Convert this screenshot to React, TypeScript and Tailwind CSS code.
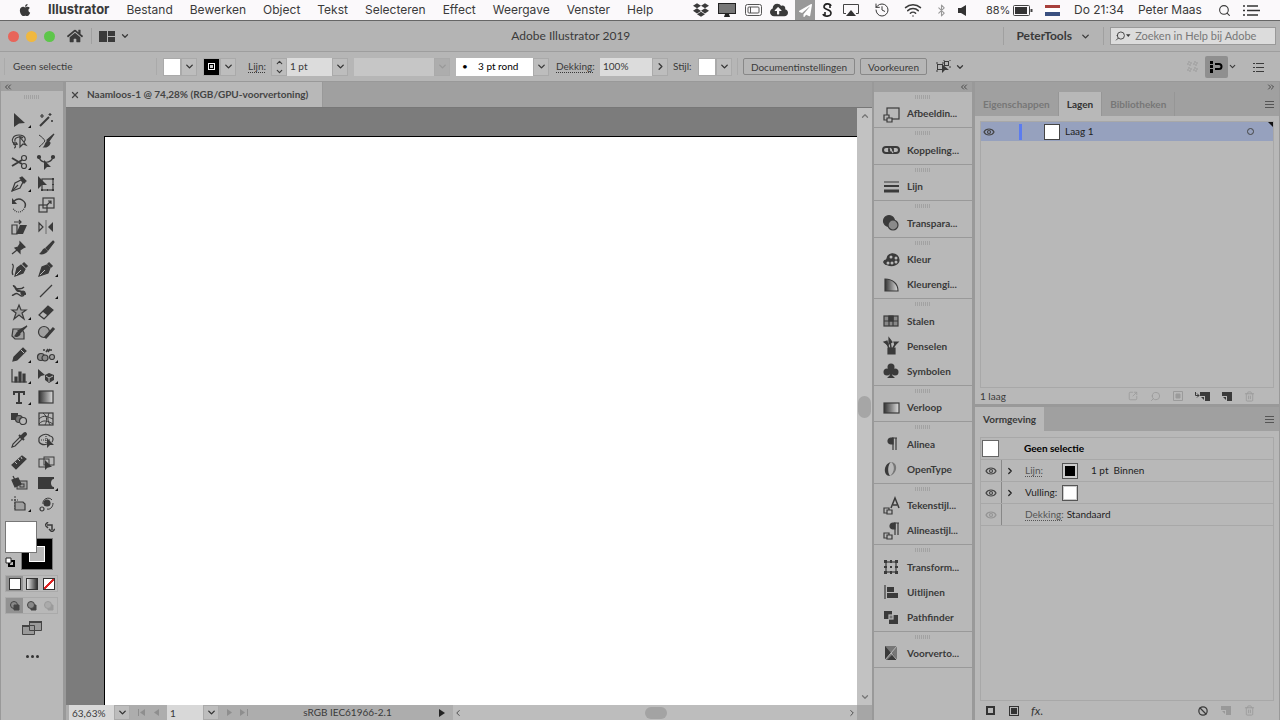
import { useState } from 'react';
import type { ReactNode } from 'react';
import { FaApple, FaDropbox, FaCloudUploadAlt, FaPaperPlane, FaHome } from 'react-icons/fa';
import { ChevronDown, ChevronRight, ChevronLeft, ChevronUp, ChevronsLeft, ChevronsRight, Search, Wifi, Bluetooth, History, Trash2, Ban, SquareArrowOutUpRight, X } from 'lucide-react';

const menus = ['Bestand', 'Bewerken', 'Object', 'Tekst', 'Selecteren', 'Effect', 'Weergave', 'Venster', 'Help'];

type Tool = { name: string; more?: boolean; art: ReactNode };

// Every tool is drawn around 0,0 in a 26 x 20 box
const tools: Tool[] = [
  { name: 'Selectie', more: true, art: <path d="M-5 -7L6 3L0 3.500L-5 7Z" fill="currentColor" stroke="none" /> },
  { name: 'Toverstaf', art: <><path d="M-6 6L3 -3" strokeWidth="2" /><path d="M-4 -6v4M-6 -4h4M4 -7v3M2.500 -5.500h3M6 0v2M5 1h2" /></> },
  { name: 'Lasso', art: <><path d="M-1 3C-6 4 -8 0 -6 -3C-4 -7 4 -7 6 -3C7 -1 6 0 5 1M-4 1c-2 0 -2 3 0 3s2 -3 0 -3M-4 4c1 2 0 3 -1 3M-4 0C-5 -4 2 -5 4 -3" /><path d="M1 -4L7 4L4 3L1 6Z" fill="#b8b8b8" /></> },
  { name: 'Segmentselectie', art: <><path d="M-7 -6C-4 -4 -2 -2 -1 0C-3 2 -4 4 -7 6" strokeWidth="1" /><path d="M8 -7L3 0L1 -1Z" fill="currentColor" /><path d="M2 0L4 2C3 5 0 6 -2 6C0 4 -1 1 2 0Z" fill="currentColor" /></> },
  { name: 'Schaar', more: true, art: <><path d="M-7 -4L3 2M-7 4L3 -2" strokeWidth="2" /><circle cx="5" cy="-4" r="2.500" /><circle cx="5" cy="4" r="2.500" /></> },
  { name: 'Kromming', art: <><path d="M-7 -5C-5 2 5 2 7 -5" /><circle cx="-7" cy="-5" r="1.500" fill="currentColor" /><circle cx="7" cy="-5" r="1.500" fill="currentColor" /><path d="M-2 -2L5 5L1 5L-2 8Z" fill="currentColor" stroke="none" /></> },
  { name: 'Mes', more: true, art: <><path d="M-7 7L-4 -1L2 -4L4 -2L1 4Z" /><path d="M1 -6L3 -7L7 -3L5 -1Z" fill="currentColor" /><path d="M-7 7L-1 1" /></> },
  { name: 'Vrije transformatie', art: <><rect x="-4" y="-5" width="11" height="11" /><path d="M-8 -8L1 1L-4 1L-8 5Z" fill="currentColor" stroke="none" /><path d="M6 -6h2v2h-2zM6 5h2v2h-2zM-5 5h2v2h-2zM6 0h2v1h-2zM1 5h1v2h-1z" fill="currentColor" stroke="none" /></> },
  { name: 'Roteren', art: <><path d="M-5 -4C1 -9 8 -3 6 2" strokeWidth="1.500" /><path d="M6 2C3 9 -4 8 -6 3" strokeDasharray="1 1" /><path d="M-7 -7V-1H-2Z" fill="currentColor" stroke="none" /></> },
  { name: 'Schalen', art: <><rect x="-3" y="-7" width="11" height="10" /><rect x="-7" y="0" width="8" height="7" /><path d="M1 0L5 -4M2 -4h3v3" /></> },
  { name: 'Schuintrekken', art: <><path d="M-7 -2h5v9h-5z" /><path d="M1 -2h7L4 7H-3Z" fill="currentColor" stroke="none" /><path d="M-5 -5h7M0 -7l2 2l-2 2" /></> },
  { name: 'Spiegelen', art: <><path d="M-7 -4L-3 0L-7 4Z" /><path d="M0 -7V7" strokeWidth="1" strokeOpacity=".6" /><path d="M7 -5V5L2 0Z" fill="currentColor" stroke="none" /></> },
  { name: 'Marionet verdraaien', art: <><path d="M1 -6L6 -1L4 0L1 2L1 5L-4 0L-1 -1L1 -4Z" fill="currentColor" /><path d="M-2 2L-7 6" /></> },
  { name: 'Penseel', art: <><path d="M7 -7L8 -6L2 2L0 0Z" fill="currentColor" /><path d="M-1 0L2 3C0 6 -4 7 -7 6C-4 4 -4 1 -1 0Z" fill="currentColor" stroke="none" /></> },
  { name: 'Pen voor kromming', art: <><path d="M-7 -5C-3 -3 -9 2 -6 6" /><path d="M-4 7L-2 -1L2 -4L6 0L4 4Z" fill="currentColor" /><path d="M4 -6L8 -2" strokeWidth="3" /><path d="M-3 6L2 1" stroke="#b8b8b8" strokeWidth="1" /></> },
  { name: 'Pen', more: true, art: <><path d="M-7 7L-4 -2L1 -4L4 -1L2 4Z" fill="currentColor" /><path d="M2 -6L6 -2" strokeWidth="3" /><path d="M-6 6L-1 1" stroke="#b8b8b8" strokeWidth="1" /></> },
  { name: 'Breedte', art: <><path d="M-6 -5C-3 -6 -4 0 0 0C4 0 3 3 7 3" strokeWidth="2" /><path d="M-7 4C-5 5 -4 1 -1 3S3 6 5 4M-3 -2C0 -3 2 -1 5 -4" strokeWidth="1.500" /><circle cx="4" cy="2" r="2" fill="currentColor" /></> },
  { name: 'Lijnsegment', more: true, art: <path d="M-6 6L6 -6" /> },
  { name: 'Ster', more: true, art: <path d="M0 -7L2 -2L7 -2L3 1L5 7L0 3L-5 7L-3 1L-7 -2L-2 -2Z" fill="#a0a0a0" /> },
  { name: 'Gummetje', art: <><path d="M-7 3L2 -6L7 -2L-2 7Z" fill="currentColor" /><path d="M-6 3L-3 0L1 3L-2 6Z" fill="#b8b8b8" stroke="none" /></> },
  { name: 'Schetsblok', art: <><path d="M-6 -4H3L5 0V6H-4L-7 3Z" fill="#a0a0a0" /><path d="M8 -7L1 0L-1 -2Z" fill="currentColor" /><path d="M-1 -1L1 1C0 3 -2 4 -4 3C-2 1 -3 0 -1 -1Z" fill="currentColor" /></> },
  { name: 'Vloeiend', art: <><circle cx="-2" cy="-1" r="5.500" fill="#a0a0a0" /><path d="M8 -5L-1 5" strokeWidth="3" /></> },
  { name: 'Potlood', more: true, art: <><path d="M-6 6L-5 2L4 -7L7 -4L-2 5Z" fill="currentColor" /><path d="M2 -5L5 -2" stroke="#b8b8b8" strokeWidth="1" /></> },
  { name: 'Symbolen spuiten', more: true, art: <><circle cx="-5" cy="2" r="3.500" fill="#8c8c8c" /><circle cx="-1" cy="3" r="3" fill="#8c8c8c" /><circle cx="6" cy="2" r="2.500" fill="#a0a0a0" /><path d="M-3 -5h2M4 -5h2M0 -3l2 -3M2 -3l2 -3" strokeWidth="1.500" /></> },
  { name: 'Grafiek', more: true, art: <><path d="M-7 -7V6H8" /><path d="M-4 1h2v5h-2zM0 -4h2v10h-2zM4 -2h2v8h-2z" fill="currentColor" /></> },
  { name: 'Perspectief', more: true, art: <><path d="M-8 -7L-1 -1L-5 0L-8 3Z" fill="currentColor" stroke="none" /><path d="M3 -3L8 -1V4L3 7L-1 4V-1Z" fill="currentColor" stroke="none" /><path d="M0 0L3 2L7 0M3 2V6" stroke="#b8b8b8" strokeWidth="1" /></> },
  { name: 'Tekst', more: true, art: <path d="M-5 -2V-5H5V-2M0 -5V6M-3 6H3" strokeWidth="2" /> },
  { name: 'Verloop', art: <rect x="-7" y="-6" width="14" height="12" fill="url(#fade)" /> },
  { name: 'Overvloeien', art: <><path d="M-8 -6h7v7h-7z" fill="currentColor" stroke="none" /><circle cx="0" cy="0" r="3.500" fill="#777" /><circle cx="4" cy="2" r="3.500" fill="#b8b8b8" /></> },
  { name: 'Net', art: <><rect x="-7" y="-6" width="14" height="12" /><path d="M-7 0C-2 -5 2 -2 7 0M-7 5C-3 0 2 2 7 5M-3 -6C2 -2 1 2 -1 6M3 -6C1 -1 2 2 4 6" strokeWidth="1" /></> },
  { name: 'Pipet', art: <><path d="M-7 7L-6 4L1 -3L3 -1L-4 6Z" /><path d="M0 -5L5 0" strokeWidth="2" /><path d="M2 -4L5 -7C7 -8 8 -6 7 -5L4 -2Z" fill="currentColor" /></> },
  { name: 'Vormen maken', art: <><path d="M1 4C-3 6 -8 3 -7 0C-8 -4 0 -8 4 -4C7 -4 8 0 6 2" /><path d="M-5 0H5M0 -4V3" strokeDasharray="1 1" /><path d="M1 -2L8 5L4 5L1 8Z" fill="currentColor" stroke="none" /></> },
  { name: 'Meten', art: <><path d="M-7 3L3 -6L7 -3L-3 7Z" fill="currentColor" /><path d="M-4 0l2 2M-1 -3l2 2M2 -5l1 2" stroke="#b8b8b8" strokeWidth="1" /></> },
  { name: 'Actief verfvak', art: <><rect x="-7" y="-3" width="10" height="8" strokeWidth="1" /><rect x="-2" y="-5" width="10" height="8" strokeWidth="1" /><path d="M-1 -2L6 5L2 5L-1 8Z" fill="currentColor" stroke="none" /></> },
  { name: 'Emmertje', art: <><rect x="-2" y="-2" width="10" height="8" fill="#a0a0a0" strokeWidth="1" /><rect x="1" y="1" width="4" height="3" strokeWidth="1" /><path d="M-7 -3L-1 -5L2 1L-4 4Z" fill="currentColor" /><path d="M-6 -7L-4 -3" /></> },
  { name: 'Omslag', more: true, art: <path d="M-8 -6H8V-4C4 -4 4 4 8 4V6H-8Z" fill="currentColor" stroke="none" /> },
  { name: 'Tekengebied', more: true, art: <><path d="M-4 -8V5M-8 -4H-1" strokeDasharray="2 1" strokeWidth="1" /><path d="M-4 -2H4L6 0V6H-4Z" fill="#a0a0a0" /></> },
  { name: 'Zwaartepunt', art: <><circle cx="1" cy="-1" r="3" fill="currentColor" /><circle cx="-4" cy="5" r="2" /><path d="M-3 0C-4 -5 3 -8 6 -4M7 -1C7 3 4 6 1 5" strokeWidth="1" /></> },
];

const hooks = <><path d="M-7 2h5v5h-5z" /><path d="M-4 4h5v4h-5z" fill="#b8b8b8" /></>;
const pilcrow = <><path d="M1 -6H6M2 -6V6M5 -6V6" /><path d="M2 -6H0A3 3 0 0 0 0 0H2Z" fill="currentColor" /></>;

const dock: { label: string; art: ReactNode }[][] = [
  [{ label: 'Afbeeldin...', art: <><rect x="-4" y="-6" width="12" height="11" /><path d="M-7 1h5v5h-5z" fill="#b8b8b8" /><path d="M-4 4h5v4h-5z" fill="#b8b8b8" /></> }],
  [{ label: 'Koppeling...', art: <><rect x="-8" y="-3" width="10" height="6" rx="3" strokeWidth="2" /><rect x="-2" y="-3" width="10" height="6" rx="3" strokeWidth="2" /><path d="M-1 -2L2 3" stroke="#b8b8b8" /></> }],
  [{ label: 'Lijn', art: <><path d="M-7 -5H8" strokeWidth="1" /><path d="M-7 -1H8" strokeWidth="2" /><path d="M-7 4H8" strokeWidth="3" /></> }],
  [{ label: 'Transpara...', art: <><circle cx="-2" cy="-2" r="5.500" fill="currentColor" /><circle cx="2" cy="2" r="5" fill="#8a8a8a" /></> }],
  [
    { label: 'Kleur', art: <><path d="M0 -6C5 -7 8 -3 8 0C8 4 2 7 -3 5C-7 5 -9 1 -5 0C-3 0 -5 -5 0 -6Z" fill="currentColor" /><g fill="#b8b8b8" stroke="none"><circle cx="0" cy="-3" r="1.500" /><circle cx="5" cy="-2" r="1.500" /><circle cx="-3" cy="3" r="1.500" /><circle cx="1" cy="3" r="1.500" /><circle cx="5" cy="2" r="1.500" /></g></> },
    { label: 'Kleurengi...', art: <path d="M-6 -6C2 -6 7 -1 7 6H-6Z" fill="url(#fade)" /> },
  ],
  [
    { label: 'Stalen', art: <><rect x="-7" y="-5" width="14" height="10" fill="#888" /><path d="M-2 -5h4v5h-4z" fill="currentColor" /><path d="M-7 0H7M-2 -5V5M2 -5V5" /></> },
    { label: 'Penselen', art: <><path d="M-3 2H4V8H-3Z" fill="currentColor" /><path d="M-2 2L-5 -4M0 2L-1 -5M2 2L5 -3" strokeWidth="1.500" /><path d="M-7 -4L-4 -5L-3 -1ZM-2 -8L1 -4L-2 -2ZM3 -4H7L4 -1Z" fill="currentColor" /></> },
    { label: 'Symbolen', art: <g fill="currentColor" stroke="none"><circle cx="0" cy="-4" r="3.500" /><circle cx="-4" cy="1" r="3.500" /><circle cx="4" cy="1" r="3.500" /><path d="M-1 -2H1L1 4L4 7H-4L-1 4Z" /></g> },
  ],
  [{ label: 'Verloop', art: <rect x="-7" y="-5" width="15" height="10" fill="url(#fade)" /> }],
  [
    { label: 'Alinea', art: pilcrow },
    { label: 'OpenType', art: <><path d="M0 -7C-8 -5 -8 7 -1 7C-4 3 -3 -5 0 -7Z" fill="currentColor" stroke="none" /><path d="M0 -7C8 -6 6 5 -1 7C4 3 4 -4 0 -7Z" fill="#777" stroke="none" /></> },
  ],
  [
    { label: 'Tekenstijl...', art: <>{hooks}<path d="M0 2L4 -8L8 2M2 -1H6" strokeWidth="1.500" /></> },
    { label: 'Alineastijl...', art: <>{hooks}<g transform="translate(2 -2)">{pilcrow}</g></> },
  ],
  [
    { label: 'Transform...', art: <><rect x="-5" y="-5" width="10" height="10" /><path d="M-7 -7h3v3h-3zM4 -7h3v3h-3zM-7 4h3v3h-3zM4 4h3v3h-3zM-1 -7h2v3h-2zM-1 4h2v3h-2zM-7 -1h3v2h-3zM4 -1h3v2h-3zM-1 -1h2v2h-2z" fill="currentColor" stroke="none" /></> },
    { label: 'Uitlijnen', art: <><path d="M-6 -7V7" /><path d="M-4 -5h7v5h-7zM-4 1h11v5h-11z" fill="currentColor" stroke="none" /></> },
    { label: 'Pathfinder', art: <><path d="M-7 -6h8v8h-8zM-2 -2h9v9h-9z" fill="currentColor" stroke="none" /><rect x="-2" y="-2" width="4" height="4" fill="#777" stroke="#b8b8b8" /></> },
  ],
  [{ label: 'Voorverto...', art: <><rect x="-6" y="-7" width="12" height="14" fill="#777" stroke="none" /><path d="M-6 -7L0 0L-6 7ZM6 7H-4L2 1Z" fill="currentColor" stroke="none" /><path d="M-6 7L6 -7M0 0L6 7" stroke="#b8b8b8" strokeWidth="1" /></> }],
];

function Art({ children, className }: { children: ReactNode; className: string }) {
  return (
    <svg viewBox="-13 -10 26 20" className={className} fill="none" stroke="currentColor" strokeWidth="1.200" aria-hidden="true">
      {children}
    </svg>
  );
}

function Grip() {
  return <div className="mx-auto h-1 w-4 bg-[repeating-linear-gradient(90deg,#a2a2a2_0_1px,transparent_1px_2px)]" />;
}

function Drop({ label, faded }: { label: string; faded?: boolean }) {
  return (
    <button aria-label={label} className={`flex h-full w-4 shrink-0 items-center justify-center border border-[#aaaaaa] ${faded ? 'bg-[#adadad] text-[#999999]' : 'bg-[#bdbdbd] text-[#333333]'}`}>
      <ChevronDown size={11} strokeWidth={3} />
    </button>
  );
}

function MenuBar() {
  return (
    <header className="flex h-5 shrink-0 items-center bg-[#fbf9fb] pr-5 pl-[18px] font-['Inter',sans-serif] text-[12px] whitespace-nowrap text-[#3a3a3a]">
      <FaApple size={14} className="mr-4" />
      <nav className="flex items-center gap-[17px]">
        <a href="#app" className="text-[13px] font-bold">Illustrator</a>
        {menus.map((m) => <a key={m} href={`#${m}`}>{m}</a>)}
      </nav>
      <div className="ml-auto flex h-full items-center">
        <span className="flex w-[26px] justify-center"><FaDropbox size={16} /></span>
        <span className="flex w-[26px] justify-center">
          <svg width="18" height="14" viewBox="0 0 18 14"><rect x=".5" y=".5" width="17" height="10" fill="#777" stroke="#222" /><path d="M7 11h4l1 3H6z" fill="#222" /></svg>
        </span>
        <span className="flex w-[26px] justify-center">
          <svg width="17" height="12" viewBox="0 0 17 12" fill="none" stroke="#555"><rect x=".5" y=".5" width="16" height="11" rx="2" /><rect x="3" y="3" width="11" height="6" rx="1" /><path d="M5.500 3v6" /></svg>
        </span>
        <span className="flex w-[26px] justify-center"><FaCloudUploadAlt size={18} /></span>
        <span className="flex w-[26px] justify-center">
          <span className="flex h-5 w-5 items-center justify-center bg-[#999999] text-white"><FaPaperPlane size={13} /></span>
        </span>
        <span className="flex w-[18px] justify-center">
          <svg width="11" height="14" viewBox="0 0 11 14" fill="none" stroke="#222" strokeWidth="1.600"><path d="M9 3C8 0 2 0 2 4C2 7 9 6 9 10C9 14 2 14 1 11M8 1V5M3 9V13" /></svg>
        </span>
        <span className="flex w-[30px] justify-center">
          <svg width="16" height="13" viewBox="0 0 16 13" fill="none" stroke="#444"><path d="M3 9.500H.5V.5h15v9H13" /><path d="M8 6l5 6H3z" fill="#333" stroke="none" /></svg>
        </span>
        <span className="flex w-8 justify-center"><History size={16} strokeWidth={1.500} /></span>
        <span className="flex w-[30px] justify-center"><Wifi size={18} /></span>
        <span className="flex w-[26px] justify-center text-[#999999]"><Bluetooth size={13} /></span>
        <span className="flex w-4 justify-center">
          <svg width="8" height="11" viewBox="0 0 8 11" fill="#333"><path d="M0 3h3l5-3v11L3 8H0z" /></svg>
        </span>
        <span className="ml-4 w-[27px] text-[11px]">88%</span>
        <svg width="20" height="11" viewBox="0 0 20 11" fill="none" stroke="#444"><rect x=".5" y=".5" width="16" height="10" rx="1" /><path d="M2 2h12v7H2z" fill="#333" stroke="none" /><path d="M18.500 4v3" strokeWidth="2" /></svg>
        <span className="ml-3 flex h-[11px] w-[15px] flex-col">
          <span className="flex-1 bg-[#a8403c]" /><span className="flex-1 bg-white" /><span className="flex-1 bg-[#3a5080]" />
        </span>
        <span className="ml-[14px] w-16">Do 21:34</span>
        <span className="w-20">Peter Maas</span>
        <Search size={13} />
        <svg width="17" height="11" viewBox="0 0 17 11" className="ml-3" stroke="#333" strokeWidth="1.500"><path d="M0 1h2M0 5.500h2M0 10h2M4 1h11M4 5.500h13M4 10h11" /></svg>
      </div>
    </header>
  );
}

function TitleBar() {
  return (
    <div className="grid h-8 shrink-0 grid-cols-[11fr_auto_14fr] items-center border-t border-b border-t-[#666666] border-b-[#9e9e9e] bg-[#b4b4b4] px-1">
      <div className="flex items-center pl-1">
        <button aria-label="Sluiten" className="h-[11px] w-[11px] rounded-full bg-[#e8655a]" />
        <button aria-label="Minimaliseren" className="ml-[7px] h-[11px] w-[11px] rounded-full bg-[#f0b840]" />
        <button aria-label="Vergroten" className="ml-[7px] h-[11px] w-[11px] rounded-full bg-[#5dc64a]" />
        <button aria-label="Home" className="ml-3"><FaHome size={16} /></button>
        <span className="mr-[7px] ml-2 h-4 border-l border-[#a0a0a0]" />
        <svg width="16" height="11" viewBox="0 0 16 11" fill="currentColor"><path d="M0 0h8v11H0zM9 0h7v5H9zM9 6h7v5H9z" /></svg>
        <ChevronDown size={10} strokeWidth={3} className="ml-[5px]" />
      </div>
      <h1 className="text-[12px]">Adobe Illustrator 2019</h1>
      <div className="flex items-center justify-end">
        <button className="flex h-[18px] items-center border-r border-l border-[#a0a0a0] px-3 text-[12px] font-bold">
          PeterTools <ChevronDown size={11} strokeWidth={3} className="ml-2" />
        </button>
        <label className="ml-[6px] flex h-[18px] w-[166px] items-center border border-[#999999] bg-[#dcdcdc] pl-1">
          <Search size={12} className="-scale-x-100" />
          <svg width="6" height="4" viewBox="0 0 6 4" fill="currentColor"><path d="M0 0h5L2.500 3z" /></svg>
          <input aria-label="Zoeken" placeholder="Zoeken in Help bij Adobe" className="w-full min-w-0 pl-1 text-[11px] outline-none placeholder:text-[#777777]" />
        </label>
      </div>
    </div>
  );
}

function ControlBar() {
  return (
    <div className="flex h-[30px] shrink-0 items-center border-b border-[#999999] bg-[#b6b6b6] pr-4 pl-1 whitespace-nowrap">
      <span className="h-[17px] w-[153px] border-r border-l border-[#aaaaaa] pl-2 leading-4">Geen selectie</span>
      <div className="ml-[6px] flex h-[18px]">
        <button aria-label="Vulling" className="w-[18px] border border-[#aaaaaa] bg-white" />
        <Drop label="Vulling kiezen" />
      </div>
      <div className="ml-[6px] flex h-[18px]">
        <button aria-label="Omtrek" className="flex w-[17px] items-center justify-center border border-[#aaaaaa] bg-black">
          <span className="h-[7px] w-[7px] border border-white bg-black p-px"><span className="block h-[3px] w-[3px] bg-[#cccccc]" /></span>
        </button>
        <Drop label="Omtrek kiezen" />
      </div>
      <label htmlFor="weight" className="ml-3 w-[23px] underline decoration-dotted underline-offset-2">Lijn:</label>
      <div className="flex h-[18px]">
        <div className="flex w-4 flex-col items-center justify-center border border-[#aaaaaa] bg-[#bdbdbd]">
          <button aria-label="Dikker"><ChevronUp size={9} strokeWidth={3} /></button>
          <button aria-label="Dunner"><ChevronDown size={9} strokeWidth={3} /></button>
        </div>
        <input id="weight" defaultValue="1 pt" className="w-[45px] bg-[#dcdcdc] pl-[3px] outline-none" />
        <Drop label="Lijndikten" />
      </div>
      <div className="ml-[6px] flex h-[18px]">
        <input aria-label="Breedteprofiel" disabled className="w-20 bg-[#c6c6c6]" />
        <Drop label="Profielen" faded />
      </div>
      <div className="relative ml-[6px] h-[18px]">
        <select aria-label="Penseel" className="h-full w-[93px] appearance-none bg-white pl-[6px] text-black outline-none">
          <option>•&nbsp;&nbsp;&nbsp;&nbsp;3 pt rond</option>
        </select>
        <span className="pointer-events-none absolute top-0 right-0 flex h-full w-4 items-center justify-center border border-[#aaaaaa] bg-[#bdbdbd]"><ChevronDown size={11} strokeWidth={3} /></span>
      </div>
      <label htmlFor="opacity" className="ml-[7px] w-11 underline decoration-dotted underline-offset-2">Dekking:</label>
      <div className="flex h-[18px]">
        <input id="opacity" defaultValue="100%" className="w-[52px] bg-[#dcdcdc] pl-[3px] outline-none" />
        <button aria-label="Dekking aanpassen" className="flex w-4 items-center justify-center border border-[#aaaaaa] bg-[#bdbdbd]"><ChevronRight size={11} strokeWidth={3} /></button>
      </div>
      <span className="ml-[5px] w-[25px]">Stijl:</span>
      <div className="flex h-[18px]">
        <button aria-label="Stijl" className="w-[18px] border border-[#aaaaaa] bg-white" />
        <Drop label="Stijlen" />
      </div>
      <span className="mx-[5px] h-[17px] border-l border-[#aaaaaa]" />
      <button className="h-[17px] w-28 rounded-xs border border-[#888888] leading-none">Documentinstellingen</button>
      <button className="ml-[5px] h-[17px] w-[67px] rounded-xs border border-[#888888] leading-none">Voorkeuren</button>
      <button aria-label="Vergelijkbare objecten" className="ml-[9px] flex items-center gap-1">
        <svg width="15" height="13" viewBox="0 0 15 13" fill="none" stroke="currentColor"><rect x="1.500" y="4.500" width="5" height="5" /><rect x="8.500" y="1.500" width="4" height="4" /><path d="M0 3h2M6 3h2M7 0h2M13 0h2M0 11h2M13 7h2" /><path d="M6 4l7 6H9l-3 3z" fill="currentColor" stroke="none" /></svg>
        <ChevronDown size={10} strokeWidth={3} />
      </button>
      <div className="ml-auto flex items-center">
        <svg width="11" height="11" viewBox="0 0 11 11" fill="none" stroke="#999" strokeDasharray="2 1"><path d="M1 1h3v3H1zM7 1h3v3H7zM1 7h3v3H1zM7 7h3v3H7z" /></svg>
        <button aria-label="Magnetisch" className="ml-[7px] flex h-[22px] w-[23px] items-center justify-center rounded-xs bg-[#8f8f8f] text-black">
          <svg width="13" height="12" viewBox="0 0 13 12" fill="currentColor"><path d="M0 0h3v3H0zM0 4h3v3H0zM0 8h3v4H0z" /><path d="M5 3h4a2.500 2.500 0 0 1 0 5H5" fill="none" stroke="currentColor" strokeWidth="2" /></svg>
        </button>
        <ChevronDown size={9} strokeWidth={3} />
        <svg width="11" height="10" viewBox="0 0 11 10" stroke="currentColor" className="ml-4"><path d="M0 1.500h2M0 5.500h2M0 9.500h2M3 1.500h8M3 5.500h8M3 9.500h8" /></svg>
      </div>
    </div>
  );
}

function ToolPanel() {
  return (
    <aside className="flex w-[66px] shrink-0 flex-col border-r-3 border-l border-[#999999] bg-[#b8b8b8]">
      <div className="flex h-[9px] shrink-0 items-center bg-[#a0a0a0] pl-[2px]"><ChevronsLeft size={10} /></div>
      <div className="pt-1"><Grip /></div>
      <div className="mt-[10px] ml-1 grid h-[406px] w-[54px] shrink-0 auto-rows-fr grid-cols-2">
        {tools.map((t) => (
          <button key={t.name} aria-label={t.name} className="flex items-center justify-center">
            <Art className="h-5 w-[26px] shrink-0">
              {t.art}
              {t.more && <path d="M12 5V8H9Z" fill="#111" stroke="none" />}
            </Art>
          </button>
        ))}
      </div>
      <div className="relative mt-[6px] ml-1 h-[50px] w-12">
        <button aria-label="Omtrekkleur" className="absolute right-0 bottom-px h-8 w-8 border border-[#777777] bg-black p-[7px]">
          <span className="block h-full w-full border border-white bg-[#b8b8b8]" />
        </button>
        <button aria-label="Vulkleur" className="absolute top-0 left-0 h-8 w-8 border border-[#777777] bg-white" />
        <svg width="10" height="10" viewBox="0 0 10 10" className="absolute top-px -right-[2px]" fill="none" stroke="currentColor" strokeWidth="1.500"><path d="M2 3h5v5M3 0L0 3l3 3M4 7l3 3l3-3" /></svg>
        <svg width="10" height="10" viewBox="0 0 10 10" className="absolute bottom-1 left-0"><path d="M4 4h5v5H4z" fill="#b8b8b8" stroke="#000" strokeWidth="2" /><path d="M1 1h5v5H1z" fill="#fff" stroke="#222" /></svg>
      </div>
      <div className="mt-1 ml-1 grid h-[17px] w-[53px] grid-cols-3 border border-[#aaaaaa] bg-[#bbbbbb]">
        <button aria-label="Kleur" className="flex items-center justify-center bg-[#949494]"><span className="h-3 w-3 border border-[#333333] bg-white" /></button>
        <button aria-label="Verloop vullen" className="flex items-center justify-center"><span className="h-3 w-3 border border-[#333333] bg-linear-to-r from-[#eeeeee] to-[#333333]" /></button>
        <button aria-label="Geen" className="flex items-center justify-center"><span className="h-3 w-3 border border-[#333333] bg-[linear-gradient(135deg,#fff_42%,#d22_42%_58%,#fff_58%)]" /></button>
      </div>
      <div className="mt-[5px] ml-1 flex h-[17px] w-[53px] items-center border border-[#aaaaaa]">
        {['#929292', 'transparent', 'transparent'].map((bg, i) => (
          <button key={i} aria-label={`Tekenmodus ${i + 1}`} style={{ background: bg, opacity: i === 2 ? 0.25 : 1 }} className="flex h-full flex-1 items-center justify-center">
            <svg width="10" height="10" viewBox="0 0 10 10" fill="#888" stroke="#444">
              {i === 0 ? <><circle cx="4" cy="4" r="3.500" /><path d="M4 4h5v5H4z" fill="#444" /></> : <><path d="M4 4h5v5H4z" fill="#444" /><circle cx="4" cy="4" r="3.500" /></>}
            </svg>
          </button>
        ))}
      </div>
      <button aria-label="Schermmodus" className="mx-auto mt-[7px]">
        <svg width="20" height="14" viewBox="0 0 20 14" fill="#999" stroke="#444"><path d="M.5 4.500h12v9H.5zM7.500 1.500h12v8h-12z" /><path d="M7 1h13" strokeWidth="2" /><path d="M0 5h7" strokeWidth="2" /></svg>
      </button>
      <button aria-label="Werkbalk bewerken" className="mx-auto mt-5 flex gap-[2px]">
        <span className="h-[3px] w-[3px] rounded-full bg-[#333333]" /><span className="h-[3px] w-[3px] rounded-full bg-[#333333]" /><span className="h-[3px] w-[3px] rounded-full bg-[#333333]" />
      </button>
    </aside>
  );
}

function StatusBar() {
  return (
    <footer className="flex h-[15px] shrink-0 items-center bg-[#adadad] pl-[3px]">
      <input aria-label="Zoom" defaultValue="63,63%" className="h-full w-[45px] bg-[#d8d8d8] pl-[3px] outline-none" />
      <Drop label="Zoomniveaus" />
      <div className="flex w-[37px] items-center justify-center gap-2 text-[#8e8e8e]">
        <svg width="8" height="7" viewBox="0 0 8 7" fill="currentColor"><path d="M0 0h1v7H0zM7 0v7L2 3.500z" /></svg>
        <svg width="5" height="7" viewBox="0 0 5 7" fill="currentColor"><path d="M5 0v7L0 3.500z" /></svg>
      </div>
      <input aria-label="Tekengebied" defaultValue="1" className="h-full w-9 bg-[#d8d8d8] pl-[3px] outline-none" />
      <Drop label="Tekengebieden" />
      <div className="flex w-[37px] items-center justify-center gap-2 text-[#8e8e8e]">
        <svg width="5" height="7" viewBox="0 0 5 7" fill="currentColor"><path d="M0 0v7l5-3.500z" /></svg>
        <svg width="8" height="7" viewBox="0 0 8 7" fill="currentColor"><path d="M7 0h1v7H7zM0 0v7l5-3.500z" /></svg>
      </div>
      <span className="w-[183px] text-center">sRGB IEC61966-2.1</span>
      <svg width="6" height="8" viewBox="0 0 6 8" fill="#222"><path d="M0 0v8l6-4z" /></svg>
      <div className="ml-2 flex h-full flex-1 items-center bg-[#bdbdbd]">
        <ChevronLeft size={10} />
        <span className="ml-[45%] h-3 w-[22px] rounded-full bg-[#a3a3a3]" />
        <ChevronRight size={10} className="ml-auto" />
      </div>
      <span className="h-full w-[15px] bg-[#a6a6a6]" />
    </footer>
  );
}

function DocumentArea() {
  return (
    <main className="flex min-w-0 flex-1 flex-col">
      <div className="flex h-[26px] shrink-0 border-b border-[#777777] bg-[#a0a0a0]">
        <div className="flex w-[257px] items-center border-r border-[#999999] bg-[#b8b8b8] pl-1 font-bold whitespace-nowrap text-[#444444]">
          <button aria-label="Document sluiten" className="mr-[7px]"><X size={10} strokeWidth={3} /></button>
          Naamloos-1 @ 74,28% (RGB/GPU-voorvertoning)
        </div>
      </div>
      <div className="flex min-h-0 flex-1">
        <div className="flex-1 bg-[#7c7c7c] pt-7 pl-[38px]"><div className="h-full border-t border-l border-black bg-white" /></div>
        <div className="flex w-[15px] shrink-0 flex-col items-center bg-[#c2c2c2] py-[3px] text-[#777777]">
          <ChevronUp size={10} strokeWidth={3} />
          <div className="flex flex-1 items-center"><span className="h-[22px] w-[13px] rounded-full bg-[#a6a6a6]" /></div>
          <ChevronDown size={10} strokeWidth={3} />
        </div>
      </div>
      <StatusBar />
    </main>
  );
}

function Dock() {
  return (
    <aside className="w-[103px] shrink-0 border-r-3 border-l-2 border-[#999999] bg-[#b8b8b8] font-bold">
      <div className="flex h-[10px] items-center justify-end bg-[#a0a0a0] pr-[3px]"><ChevronsLeft size={10} /></div>
      <div className="flex h-[576px] flex-col">
        {dock.map((group) => (
          <section key={group[0].label} className="flex flex-auto flex-col justify-end border-b border-[#999999] pb-px">
            <div className="flex-1 pt-[3px]"><Grip /></div>
            {group.map((item) => (
              <button key={item.label} className="flex h-[25px] shrink-0 items-center pl-1 whitespace-nowrap">
                <Art className="mr-[3px] h-5 w-[26px]">{item.art}</Art>
                {item.label}
              </button>
            ))}
          </section>
        ))}
      </div>
    </aside>
  );
}

function Burger() {
  return (
    <button aria-label="Deelvenstermenu" className="mr-[5px] ml-auto flex flex-col gap-[2px]">
      <span className="h-px w-[9px] bg-[#555555]" /><span className="h-px w-[9px] bg-[#555555]" /><span className="h-px w-[9px] bg-[#555555]" />
    </button>
  );
}

function Eye({ faded }: { faded?: boolean }) {
  return (
    <svg width="12" height="8" viewBox="0 0 12 8" className={faded ? 'opacity-30' : ''} fill="none" stroke="#444" strokeWidth="1.200">
      <path d="M1 4C3 0 9 0 11 4C9 8 3 8 1 4Z" /><circle cx="6" cy="4" r="1.500" />
    </svg>
  );
}

function NewIcon() {
  return <svg width="10" height="9" viewBox="0 0 10 9" fill="currentColor"><path d="M0 0h10v9H5V4H0z" /><path d="M1 5h3v3z" /></svg>;
}

function LayersPanel() {
  const [tab, setTab] = useState('Lagen');
  return (
    <section className="flex h-[312px] shrink-0 flex-col">
      <div className="flex h-6 shrink-0 items-center bg-[#a0a0a0] font-bold">
        {['Eigenschappen', 'Lagen', 'Bibliotheken'].map((t) => (
          <button key={t} onClick={() => setTab(t)} className={`h-full border-r border-[#969696] px-2 ${t === tab ? 'bg-[#b8b8b8] text-[#333333]' : 'text-[#777777]'}`}>{t}</button>
        ))}
        <Burger />
      </div>
      <div className="mx-[5px] mt-[5px] flex-1 border border-[#a8a8a8]">
        <div className="relative flex h-[19px] items-center bg-[#96a1be] text-[#222222]">
          <span className="ml-[2px] flex w-[36px] justify-start"><Eye /></span>
          <span className="h-4 w-[3px] bg-[#5b7cf0]" />
          <span className="ml-[22px] h-4 w-4 border border-[#444444] bg-white" />
          <span className="ml-[5px]">Laag 1</span>
          <span className="mr-[19px] ml-auto h-[7px] w-[7px] rounded-full border border-[#444444]" />
          <span className="absolute top-0 right-0 h-[5px] w-[5px] bg-[#111111] [clip-path:polygon(0_0,100%_0,100%_100%)]" />
        </div>
      </div>
      <div className="flex h-4 shrink-0 items-center pr-6 pl-[5px]">
        1 laag
        <div className="ml-auto flex items-center gap-3">
          <button aria-label="Exporteren" className="text-[#9b9b9b]"><SquareArrowOutUpRight size={10} /></button>
          <button aria-label="Zoeken" className="text-[#9b9b9b]"><Search size={11} className="-scale-x-100" /></button>
          <button aria-label="Masker" className="text-[#9b9b9b]"><svg width="10" height="10" viewBox="0 0 10 10" fill="none" stroke="currentColor"><path d="M.5.5h9v9h-9z" /><path d="M3 3h4v4H3z" fill="currentColor" /></svg></button>
          <button aria-label="Sublaag" className="flex"><svg width="5" height="6" viewBox="0 0 5 6" fill="none" stroke="currentColor"><path d="M.5 0v3.500H4M2 1.500l2 2l-2 2" /></svg><NewIcon /></button>
          <button aria-label="Nieuwe laag"><NewIcon /></button>
          <button aria-label="Verwijderen" className="text-[#9b9b9b]"><Trash2 size={11} /></button>
        </div>
      </div>
    </section>
  );
}

function AppearancePanel() {
  return (
    <section className="flex min-h-0 flex-1 flex-col border-t-3 border-[#999999]">
      <div className="flex h-6 shrink-0 items-center bg-[#a0a0a0] font-bold">
        <button className="h-full bg-[#b8b8b8] px-2">Vormgeving</button>
        <Burger />
      </div>
      <div className="mx-[5px] mt-[6px] flex-1 border border-[#a8a8a8] text-[#222222]">
        <div className="flex h-[22px] items-center border-b border-[#a8a8a8] pl-px font-bold text-black">
          <span className="mr-[25px] h-[17px] w-[17px] border border-[#666666] bg-white" />
          Geen selectie
        </div>
        <div className="flex h-[22px] items-center border-b border-[#a8a8a8]">
          <span className="flex h-full w-[21px] items-center justify-center border-r border-[#888888]"><Eye /></span>
          <ChevronRight size={10} strokeWidth={3} className="mx-[3px]" />
          <a href="#lijn" className="ml-[7px] w-[37px] text-[#555555] underline decoration-dotted underline-offset-2">Lijn:</a>
          <span className="h-4 w-4 border border-[#555555] bg-[#cccccc] p-[2px]"><span className="block h-full bg-black" /></span>
          <span className="ml-[13px]">1 pt&nbsp; Binnen</span>
        </div>
        <div className="flex h-[22px] items-center border-b border-[#a8a8a8]">
          <span className="flex h-full w-[21px] items-center justify-center border-r border-[#888888]"><Eye /></span>
          <ChevronRight size={10} strokeWidth={3} className="mx-[3px]" />
          <span className="ml-[7px] w-[37px]">Vulling:</span>
          <span className="h-4 w-4 border border-[#555555] bg-[#cccccc] p-px"><span className="block h-full bg-white" /></span>
        </div>
        <div className="flex h-[22px] items-center border-b border-[#a8a8a8]">
          <span className="mr-[23px] flex h-full w-[21px] items-center justify-center border-r border-[#888888]"><Eye faded /></span>
          <a href="#dekking" className="mr-[3px] text-[#555555] underline decoration-dotted underline-offset-2">Dekking:</a>
          Standaard
        </div>
      </div>
      <div className="flex h-[19px] shrink-0 items-center pr-6 pl-[11px]">
        <button aria-label="Nieuwe omtrek" className="h-[9px] w-[9px] border-2 border-[#333333]" />
        <button aria-label="Nieuwe vulling" className="ml-[14px] h-[10px] w-[10px] border border-[#333333] p-px"><span className="block h-full bg-[#333333]" /></button>
        <button className="ml-3 text-[12px] italic">fx.</button>
        <div className="ml-auto flex items-center gap-[13px]">
          <button aria-label="Wissen"><Ban size={10} strokeWidth={3} /></button>
          <button aria-label="Dupliceren" className="text-[#999999]"><NewIcon /></button>
          <button aria-label="Item verwijderen" className="text-[#9b9b9b]"><Trash2 size={11} /></button>
        </div>
      </div>
    </section>
  );
}

export default function App() {
  return (
    <div className="flex h-screen flex-col overflow-hidden bg-[#b8b8b8] font-['Lato',sans-serif] text-[10px] text-[#3a3a3a]">
      <svg className="absolute h-0 w-0" aria-hidden="true">
        <linearGradient id="fade"><stop offset="0" stopColor="#333" /><stop offset="1" stopColor="#ddd" /></linearGradient>
      </svg>
      <MenuBar />
      <TitleBar />
      <ControlBar />
      <div className="flex min-h-0 flex-1">
        <ToolPanel />
        <DocumentArea />
        <Dock />
        <div className="flex w-[305px] shrink-0 flex-col border-r border-[#999999]">
          <div className="flex h-[10px] shrink-0 items-center justify-end bg-[#a0a0a0] pr-[3px]"><ChevronsRight size={10} /></div>
          <LayersPanel />
          <AppearancePanel />
        </div>
      </div>
    </div>
  );
}
